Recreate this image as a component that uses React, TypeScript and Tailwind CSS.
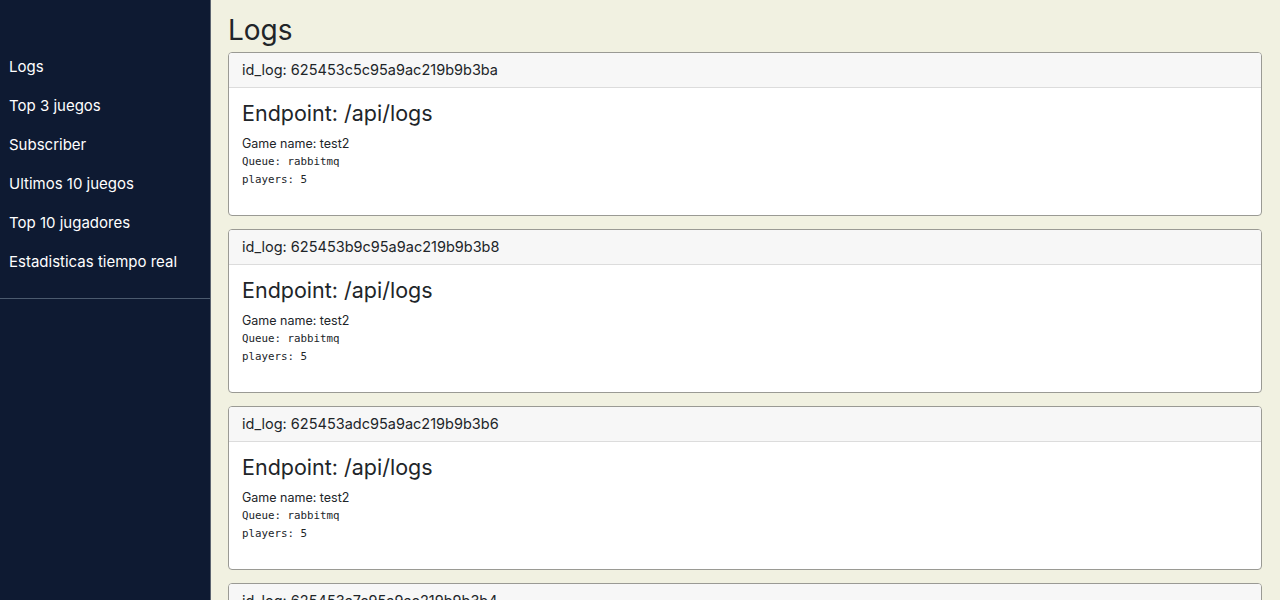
const navItems = [
  "Logs",
  "Top 3 juegos",
  "Subscriber",
  "Ultimos 10 juegos",
  "Top 10 jugadores",
  "Estadisticas tiempo real",
];

const logs = [
  { id: "625453c5c95a9ac219b9b3ba", endpoint: "/api/logs", game: "test2", queue: "rabbitmq", players: 5 },
  { id: "625453b9c95a9ac219b9b3b8", endpoint: "/api/logs", game: "test2", queue: "rabbitmq", players: 5 },
  { id: "625453adc95a9ac219b9b3b6", endpoint: "/api/logs", game: "test2", queue: "rabbitmq", players: 5 },
  { id: "625453a7c95a9ac219b9b3b4", endpoint: "/api/logs", game: "test2", queue: "rabbitmq", players: 5 },
];

function Sidebar() {
  return (
    <aside className="w-[211px] shrink-0 bg-[#0e1a32] border-r border-[#5b6470] min-h-screen">
      <ul className="pt-[56px] pb-[8px] border-b border-[#4b5a6e]">
        {navItems.map((item) => (
          <li key={item} className="h-[39px] pl-[9px] text-[15px] leading-[22px] text-white">
            {item}
          </li>
        ))}
      </ul>
    </aside>
  );
}

function LogCard({ log }: { log: (typeof logs)[number] }) {
  return (
    <div className="mb-[13px] rounded-[4px] border border-[#9a9a94] bg-white overflow-hidden">
      <div className="h-[35px] px-[13px] flex items-center bg-[#f7f7f7] border-b border-[#dcdcdc] text-[14.5px] text-[#212529]">
        id_log: {log.id}
      </div>
      <div className="px-[13px] pt-[12px] pb-[26px] text-[#212529]">
        <h5 className="text-[21.5px] leading-[26px] mb-[9px]">Endpoint: {log.endpoint}</h5>
        <p className="text-[12.5px] leading-[18px]">Game name: {log.game}</p>
        <p className="font-['DejaVu_Sans_Mono',monospace] text-[10.8px] leading-[18px]">Queue: {log.queue}</p>
        <p className="font-['DejaVu_Sans_Mono',monospace] text-[10.8px] leading-[18px]">players: {log.players}</p>
      </div>
    </div>
  );
}

export default function App() {
  return (
    <div className="flex min-h-screen bg-[#f1f1e1] font-['Inter',sans-serif]">
      <Sidebar />
      <main className="flex-1 pl-[17px] pr-[18px]">
        <h1 className="text-[28px] leading-[34px] pt-[13px] pb-[5px] text-[#212529]">Logs</h1>
        {logs.map((log) => (
          <LogCard key={log.id} log={log} />
        ))}
      </main>
    </div>
  );
}
